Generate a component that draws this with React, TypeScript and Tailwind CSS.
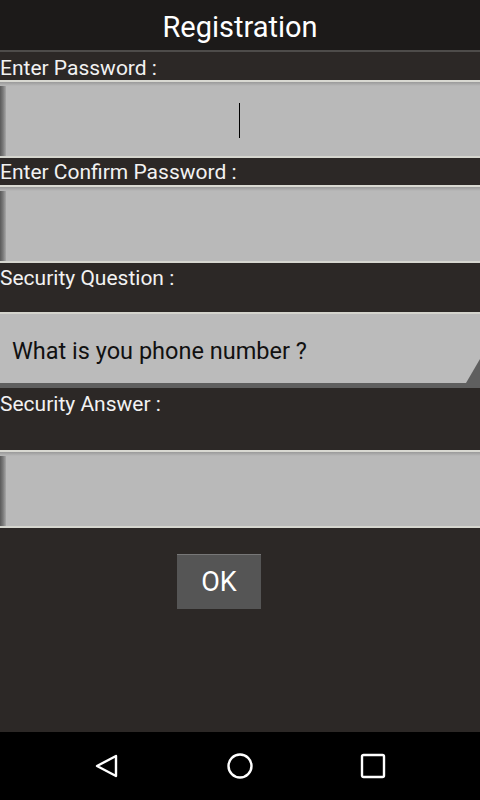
import React from "react"

function Label({ text, className = "" }: { text: string; className?: string }) {
  return <div className={`text-[21px] leading-[24px] text-[#f2f2f2] ${className}`}>{text}</div>
}

function TextBox({ caret = false }: { caret?: boolean }) {
  return (
    <div className="relative h-[78px] border-t-2 border-b-2 border-t-[#d9d9d2] border-b-[#d6d6cf] bg-[#b9b9b9]">
      <div className="absolute inset-y-0 left-0 w-[6px] bg-gradient-to-r from-[#5a5a5a] via-[#7a7a7a] to-[#a8a8a8]" />
      <div className="absolute inset-x-0 top-0 h-[4px] bg-gradient-to-b from-[#9a9a9a] to-[#b9b9b9]" />
      {caret ? <div className="absolute left-[239px] top-[21px] h-[35px] w-px bg-black" /> : null}
    </div>
  )
}

export default function App() {
  return (
    <div className="flex h-[800px] w-[480px] flex-col bg-[#2c2826] font-['Roboto',sans-serif]">
      <div className="flex h-[50px] items-center justify-center bg-[#1c1a19] pt-[6px]">
        <h1 className="text-[29px] text-white">Registration</h1>
      </div>
      <div className="h-[2px] bg-[#4e4c4a]" />

      <div className="flex flex-1 flex-col">
        <Label text="Enter Password :" className="h-[28px] pt-[4px]" />
        <TextBox caret />

        <Label text="Enter Confirm Password :" className="h-[27px] pt-[2px]" />
        <TextBox />

        <Label text="Security Question :" className="h-[49px] pt-[3px]" />
        <div className="relative flex h-[76px] items-center border-t-2 border-b-[5px] border-t-[#d4d4cd] border-b-[#5f5f5f] bg-[#bbbbbb] pl-[12px] pt-[7px]">
          <span className="text-[23.5px] text-[#111]">What is you phone number ?</span>
          <svg className="absolute bottom-0 right-0" width="14" height="24" viewBox="0 0 14 24">
            <polygon points="14,0 14,24 0,24" fill="#5f5f5f" />
          </svg>
        </div>

        <Label text="Security Answer :" className="h-[62px] pt-[4px]" />
        <TextBox />

        <div className="mt-[26px] flex pl-[177px]">
          <button className="flex h-[55px] w-[84px] items-center justify-center border-t border-[#777] bg-[#555555] text-[27px] text-white">
            OK
          </button>
        </div>
      </div>

      <div className="flex h-[68px] items-center justify-between bg-black px-[94px]">
        <svg width="26" height="26" viewBox="0 0 26 26">
          <path d="M22 3 L3 13 L22 23 Z" fill="none" stroke="white" strokeWidth="2.4" strokeLinejoin="round" />
        </svg>
        <svg width="28" height="28" viewBox="0 0 28 28">
          <circle cx="14" cy="14" r="11.5" fill="none" stroke="white" strokeWidth="2.4" />
        </svg>
        <svg width="26" height="26" viewBox="0 0 26 26">
          <rect x="2" y="2" width="22" height="22" rx="1.5" fill="none" stroke="white" strokeWidth="2.4" />
        </svg>
      </div>
    </div>
  )
}
